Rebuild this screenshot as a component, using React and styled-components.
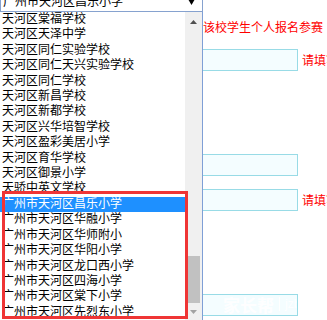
import React from 'react';
import styled, { createGlobalStyle } from 'styled-components';

const GlobalStyle = createGlobalStyle`
  html, body { margin: 0; padding: 0; background: #fff; }
  body {
    width: 327px;
    height: 320px;
    overflow: hidden;
    font-family: "Noto Sans CJK SC", "Noto Sans", sans-serif;
    font-size: 12px;
    color: #000;
  }
`;

const Page = styled.div`
  position: relative;
  width: 327px;
  height: 320px;
  overflow: hidden;
  background: #fff;
`;

const Form = styled.div`
  display: flex;
  flex-direction: column;
`;

const SelectBox = styled.div`
  box-sizing: border-box;
  width: 203px;
  height: 22px;
  margin-top: -10px;
  border: 1px solid #86a2cf;
  background: #fff;
  display: flex;
  align-items: center;
  justify-content: space-between;
  padding: 0 7px 0 2px;
  line-height: 12px;
  white-space: nowrap;
`;

const Note = styled.div`
  margin-top: 7px;
  height: 16px;
  line-height: 16px;
  padding-left: 179px;
  color: #ff0000;
  white-space: nowrap;
`;

const FieldRow = styled.div`
  display: flex;
  align-items: center;
  margin-top: ${p => p.$gap}px;
  padding-left: 130px;
  height: 22px;
  white-space: nowrap;
`;

const InputBox = styled.div`
  box-sizing: border-box;
  flex-shrink: 0;
  width: 168px;
  height: 22px;
  border: 1px solid #98dbe6;
  background: #f4fdff;
  display: flex;
  align-items: center;
  overflow: hidden;
`;

const Hint = styled.span`
  margin-left: 4px;
  color: #ff0000;
  line-height: 16px;
`;

const Watermark = styled.span`
  margin-left: 92px;
  margin-top: -2px;
  display: flex;
  align-items: center;
  gap: 5px;
  color: rgba(255, 255, 255, 0.95);
`;

const WmBrand = styled.span`
  font-weight: 700;
  font-size: 17px;
  line-height: 17px;
`;

const WmBar = styled.span`
  width: 1px;
  height: 14px;
  background: rgba(255, 255, 255, 0.95);
`;

const WmSite = styled.span`
  font-family: "Liberation Sans", Arial, sans-serif;
  font-size: 12px;
  line-height: 12px;
`;

const Dropdown = styled.div`
  position: absolute;
  top: 12px;
  left: 0;
  width: 203px;
  height: 308px;
  box-sizing: border-box;
  border-right: 1px solid #7f9fd6;
  background: #fff;
  display: flex;
  overflow: hidden;
`;

const Options = styled.ul`
  list-style: none;
  margin: 0;
  padding: 0;
  flex: 1;
  min-width: 0;
  display: grid;
  grid-auto-rows: 15.42px;
  align-content: start;
`;

const Option = styled.li`
  padding-left: 2px;
  line-height: 12px;
  white-space: nowrap;
  overflow: hidden;
  background: ${p => (p.$selected ? '#1e90ff' : 'transparent')};
  color: ${p => (p.$selected ? '#fff' : '#000')};
`;

const Scrollbar = styled.div`
  width: 17px;
  flex-shrink: 0;
  background: #f0f0f0;
  display: flex;
  flex-direction: column;
`;

const ScrollButton = styled.div`
  box-sizing: border-box;
  height: 17px;
  flex-shrink: 0;
  display: flex;
  align-items: center;
  justify-content: center;
  padding-top: ${p => (p.$up ? 2 : 0)}px;
`;

const Track = styled.div`
  flex: 1;
  display: flex;
  flex-direction: column;
  justify-content: flex-end;
`;

const Thumb = styled.div`
  height: 47px;
  margin: 0 2px 0 3px;
  background: #c1c1c1;
`;

const Callout = styled.div`
  position: absolute;
  left: 2px;
  top: 191px;
  width: 186px;
  height: 128px;
  box-sizing: border-box;
  border: 3px solid #ef3535;
  pointer-events: none;
`;

const options = [
  '天河区棠福学校',
  '天河区天泽中学',
  '天河区同仁实验学校',
  '天河区同仁天兴实验学校',
  '天河区同仁学校',
  '天河区新昌学校',
  '天河区新都学校',
  '天河区兴华培智学校',
  '天河区盈彩美居小学',
  '天河区育华学校',
  '天河区御景小学',
  '天骄中英文学校',
  '广州市天河区昌乐小学',
  '广州市天河区华融小学',
  '广州市天河区华师附小',
  '广州市天河区华阳小学',
  '广州市天河区龙口西小学',
  '广州市天河区四海小学',
  '广州市天河区棠下小学',
  '广州市天河区先烈东小学',
];

const selected = '广州市天河区昌乐小学';

const Arrow = ({ dir, color }) =>
  dir === 'up' ? (
    <svg width="7" height="4" viewBox="0 0 7 4">
      <polygon points="3.5,0 7,4 0,4" fill={color} />
    </svg>
  ) : (
    <svg width="7" height="4" viewBox="0 0 7 4">
      <polygon points="0,0 7,0 3.5,4" fill={color} />
    </svg>
  );

export default function App() {
  return (
    <Page>
      <GlobalStyle />
      <Form>
        <SelectBox>
          <span>{selected}</span>
          <svg width="7" height="8" viewBox="0 0 7 8">
            <polygon points="0,2 7,2 3.5,8" fill="#000" />
          </svg>
        </SelectBox>
        <Note>允许该校学生个人报名参赛</Note>
        <FieldRow $gap={14}>
          <InputBox />
          <Hint>请填写学校名称</Hint>
        </FieldRow>
        <FieldRow $gap={83}>
          <InputBox />
        </FieldRow>
        <FieldRow $gap={13}>
          <InputBox />
          <Hint>请填写学校地址</Hint>
        </FieldRow>
        <FieldRow $gap={83}>
          <InputBox>
            <Watermark>
              <WmBrand>家长帮</WmBrand>
              <WmBar />
              <WmSite>jzb.com</WmSite>
            </Watermark>
          </InputBox>
        </FieldRow>
      </Form>

      <Dropdown>
        <Options>
          {options.map(o => (
            <Option key={o} $selected={o === selected}>
              {o}
            </Option>
          ))}
        </Options>
        <Scrollbar>
          <ScrollButton $up>
            <Arrow dir="up" color="#505050" />
          </ScrollButton>
          <Track>
            <Thumb />
          </Track>
          <ScrollButton>
            <Arrow dir="down" color="#a3a3a3" />
          </ScrollButton>
        </Scrollbar>
      </Dropdown>

      <Callout />
    </Page>
  );
}
